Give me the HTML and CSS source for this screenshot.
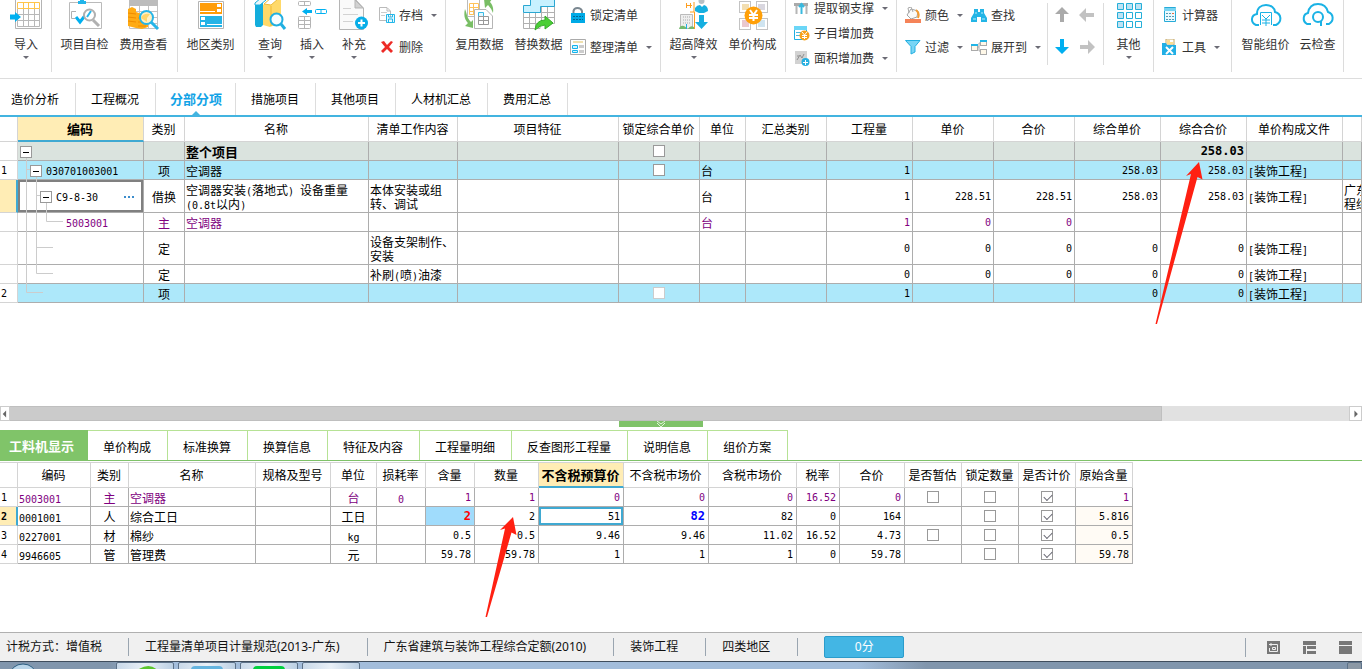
FILE: index.html
```html
<!DOCTYPE html>
<html lang="zh-CN">
<head>
<meta charset="utf-8">
<title>分部分项</title>
<link rel="stylesheet" href="styles.css">
</head>
<body>
<header class="ribbon">
  <div class="group">
    <button class="big w44"><svg viewBox="8 0 36 32"><path d="M15.500-2V28.500H41.500V-2" fill="#fff" stroke="#b4b4b4"/><path d="M17.500 8.500V26.500H39.500V8.500M17.500 14.500H39.500M17.500 20.500H39.500M23.500 8.500V26.500M28.500 8.500V26.500M34.500 8.500V26.500" fill="none" stroke="#b8b8b8"/><path d="M17.500 2.500H39.500V8.500H17.500ZM23.500 2.500V8.500M28.500 2.500V8.500M34.500 2.500V8.500" fill="none" stroke="#ffc54a"/><path d="M10 14.500H15V12L21 17L15 22V19.500H10Z" fill="#00b0f0"/></svg><span>导入</span><i class="caret"></i></button>
  </div>
  <div class="group snug">
    <button class="big"><svg viewBox="67 0 36 32"><path d="M69.500 2.500H101.500V28.500H69.500Z" fill="#fff" stroke="#bababa"/><path d="M78 4V1H80V-1H84V1H86V4Z" fill="#21b5ea"/><path d="M76 11.500H71.500V18.500H75" fill="none" stroke="#b0b0b0"/><path d="M76 17L80 22L87 13" fill="none" stroke="#00b0f0" stroke-width="3"/><circle cx="89.500" cy="15" r="5.500" fill="#fff" stroke="#b0b0b0" stroke-width="2"/><path d="M87 17L91 11" stroke="#25b7ec" stroke-width="2"/><path d="M93 20L99 26" stroke="#b0b0b0" stroke-width="3"/></svg><span>项目自检</span></button>
    <button class="big"><svg viewBox="126 0 36 32"><path d="M129.500-1V28.500H157.500V-1M129.500 11.500H157M139.500 5V28M148.500 5V28M129 17.500H157M129 23.500H157" fill="#fff" stroke="#c2c2c2"/><path d="M129 0H158V6H129Z" fill="#bcbcbc"/><path d="M128 9L132 7L136 9V12L142 14L148 13V27L142 29L136 28L128 26Z" fill="#ffab14"/><path d="M128 13L136 14M128 17L136 18M128 21L136 22M138 18H147M138 22H147M138 26H146" stroke="#ef8c00" fill="none"/><circle cx="146.500" cy="17.500" r="6.500" fill="#fff0c4" stroke="#26b5e8" stroke-width="2"/><path d="M141 18Q143 13 150 14L147 18V22Z" fill="#ffd66d"/><path d="M151 22L158 29" stroke="#26b5e8" stroke-width="3"/></svg><span>费用查看</span></button>
  </div>
  <div class="group snug">
    <button class="big"><svg viewBox="193 0 36 32"><path d="M198.500 1.500H223.500V28.500H198.500Z" fill="#fff" stroke="#b4b4b4"/><path d="M200 3H222V14H200Z" fill="#ff9d0a"/><path d="M217 4H221V7H217ZM217 9H221V12H217ZM200 11H215V12H200Z" fill="#fff"/><path d="M200 16H222V27H200Z" fill="#24b3e6"/><path d="M201 17H205V20H201ZM201 22H205V25H201ZM207 24H222V25H207Z" fill="#fff"/></svg><span>地区类别</span></button>
  </div>
  <div class="group flush">
    <button class="big w42"><svg viewBox="252 0 36 32"><path d="M255 4L261 0H263V25L261 27H256L255 25Z" fill="#13addc"/><path d="M255 3L261-2L266 0L260 5H255Z" fill="#e9f7fb" stroke="#19aedc"/><path d="M263 5L270-1H281V23L270 27L263 25Z" fill="#ffd969"/><path d="M264 4L271-2L278-1L271 5Z" fill="#fff" stroke="#edbb38"/><path d="M271 6V26" stroke="#efb934"/><circle cx="276.500" cy="19.500" r="6" fill="#f7fcff" stroke="#20afe1" stroke-width="2"/><path d="M281 24L285 29" stroke="#20afe1" stroke-width="3"/></svg><span>查询</span><i class="caret"></i></button>
    <button class="big w42"><svg viewBox="294 0 36 32"><g fill="none" stroke="#b4b4b4"><rect x="298.500" y="1.500" width="12" height="4" rx="1"/><path d="M304.500 1V6"/><rect x="298.500" y="16.500" width="12" height="12" rx="1"/><path d="M304.500 16V29M298 20.500H311M298 24.500H311"/></g><path d="M302 11.500L307 8V10H312V13H307V15Z" fill="#00b0f0"/><rect x="315.500" y="9.500" width="11" height="4" rx="1" fill="#fff" stroke="#00b0f0"/><path d="M321 9V14" stroke="#00b0f0"/></svg><span>插入</span><i class="caret"></i></button>
    <button class="big w42"><svg viewBox="336 0 36 32"><path d="M339.500-1H355L363.500 8V29.500H339.500Z" fill="#fafafa" stroke="#b5b5b5"/><path d="M355 0V8H363Z" fill="#d2d2d2" stroke="#b5b5b5"/><path d="M343 8.500H351M343 14.500H358M343 21.500H353" stroke="#d3d3d3"/><circle cx="361.500" cy="23" r="6.500" fill="#08aee8"/><path d="M358 23H365M361.500 19.500V26.500" stroke="#fff" stroke-width="2"/></svg><span>补充</span><i class="caret"></i></button>
    <div class="stack two">
      <button class="small"><svg viewBox="379 7 16 16"><path d="M379.500 7.500H387L390.500 11V20.500H379.500ZM387 8V11H390" fill="#fff" stroke="#bababa"/><path d="M381 12.500H387M381 15.500H385" stroke="#ccc"/><path d="M386.500 14.500H394.500V22.500H386.500ZM388.500 14V17H392.500V14M388.500 22V19H392.500V22" fill="#e7f8fe" stroke="#24b7e9"/></svg><span>存档</span><i class="caret"></i></button>
      <button class="small"><svg viewBox="379 39 16 16"><path d="M381 42L384 41L387 45L391 41L393 42L389 47L393 51L391 53L387 49L383 53L381 51L385 47Z" fill="#ed2b26"/></svg><span>删除</span></button>
    </div>
  </div>
  <div class="group flush">
    <button class="big"><svg viewBox="461 0 36 32"><path d="M466.500 0V16.500H478.500V0" fill="#fff" stroke="#bbb"/><path d="M468.500 3.500H477.500V14.500H468.500ZM468 7.500H478M468 11.500H478M472.500 3V15" fill="none" stroke="#ffc35a"/><path d="M473.500 9.500H485L491.500 16V28.500H473.500Z" fill="#fff" stroke="#b5b5b5"/><path d="M477.500 12.500H482.500V16.500H477.500Z" fill="#e1f7ff" stroke="#38bbe6"/><path d="M477.500 16.500V24.500H487.500V16.500ZM477 20.500H488M482.500 17V25" fill="none" stroke="#999"/><path d="M464 9C462 17 465 21 467 23L464 26L472 28V20L470 22C466 18 466 14 464 9Z" fill="#79be65"/><path d="M483-1H491L489 2Q493 6 492 13Q490 8 487 5L484 8Z" fill="#79be65"/></svg><span>复用数据</span></button>
    <button class="big"><svg viewBox="519 0 36 32"><path d="M521.500 12.500V28.500H538V23.500H552.500V6" fill="#fff" stroke="#b0b0b0"/><path d="M521.500 17.500H552M521.500 23.500H552M527.500 12V28M533.500 12V28M539.500 7V23M545.500 7V23M538 12.500H552" fill="none" stroke="#b0b0b0"/><path d="M528.500-1H552.500V6.500H538.500V12.500H521.500V5.500H528.500Z" fill="#c8f1ff" stroke="#2aa7d2"/><path d="M533 30Q534 20 543 20V16L551 23L543 29V25Q538 25 533 30Z" fill="#4bcf36" stroke="#35ac2a"/></svg><span>替换数据</span></button>
    <div class="stack two tight">
      <button class="small"><svg viewBox="570 7 16 16"><path d="M573.500 13V11Q574 8 577.500 8Q581 8 582 11V13" fill="none" stroke="#7b8891" stroke-width="2"/><rect x="571" y="13" width="14" height="10" fill="#00aae6"/><path d="M573 16.500H583M573 19.500H583" stroke="#076591" stroke-dasharray="2 1"/></svg><span>锁定清单</span></button>
      <button class="small"><svg viewBox="570 39 16 16"><path d="M570.500 39.500H585.500V54.500H570.500Z" fill="#fff" stroke="#aaa"/><path d="M573 41H583V43H573Z" fill="#efe0ae"/><path d="M572.500 45.500H577.500V48.500H572.500ZM572.500 50.500H577.500V52.500H572.500Z" fill="#d1f4ff" stroke="#13b4ec"/><path d="M579 45H584V48H579ZM579 50H584V53H579Z" fill="#ccc"/></svg><span>整理清单</span><i class="caret"></i></button>
    </div>
  </div>
  <div class="group narrow">
    <button class="big"><svg viewBox="676 0 36 32"><path d="M686.500 3V8M690.500 3V8M686 5.500H692M694 2V12H690M694.500 12V29" fill="none" stroke="#ff9e1e"/><path d="M680.500 14.500H692.500V28.500H680.500Z" fill="#eee" stroke="#bbb"/><path d="M683 17H691M683 20H691M683 23H691" stroke="#aaa" stroke-dasharray="1 1"/><path d="M679 29Q680 25 684 26L687 28V29ZM688 29Q690 25 694 27V29Z" fill="#75ba6e"/><path d="M686.500 24V29" stroke="#20b0e2"/><circle cx="701.500" cy="1" r="3" fill="#b7c0c5"/><path d="M695 11V8Q697 5 700 5L702 7L704 5Q708 6 708 11L704 13H699Z" fill="#16afe0"/><path d="M699 15H704V22H708L701.500 29L695 22H699Z" fill="#16afe0"/></svg><span>超高降效</span><i class="caret"></i></button>
    <button class="big"><svg viewBox="734 0 36 32"><g fill="#fff" stroke="#c3c3c3"><rect x="738.500" y="1.500" width="11" height="11"/><rect x="755.500" y="1.500" width="11" height="11"/><rect x="738.500" y="18.500" width="11" height="11"/><rect x="755.500" y="18.500" width="11" height="11"/></g><path d="M741 4H748V10H741Z" fill="#f2deb1"/><path d="M757 4H764V10H757Z" fill="#d9d7df"/><path d="M741 20H748V27H741Z" fill="#eac8ce"/><path d="M757 20H764V27H757Z" fill="#cfe4f0"/><circle cx="752.500" cy="15.500" r="9" fill="#ffa009"/><path d="M749 10L752.500 15L756 10M752.500 15V21M748 15H757M748 18H757" fill="none" stroke="#fff" stroke-width="2"/></svg><span>单价构成</span></button>
  </div>
  <div class="group flush">
    <div class="stack three">
      <button class="small"><svg viewBox="795 0 16 16"><path d="M795 3H809V6H795Z" fill="#aaa"/><path d="M797.500 6V14M807.500 6V14" stroke="#b6b6b6" stroke-width="2"/><path d="M802.500 3V14M800 7L802.500 4L805 7" fill="none" stroke="#38b9df" stroke-width="2"/></svg><span>提取钢支撑</span><i class="caret"></i></button>
      <button class="small"><svg viewBox="795 25 16 16"><path d="M795.500 26.500H807.500V39.500H795.500Z" fill="#fff" stroke="#1eaee3"/><path d="M795 26H808V30H795Z" fill="#6bd6f7"/><path d="M797 32.500H802M797 35.500H802" stroke="#4bbade"/><circle cx="805.500" cy="35.500" r="5" fill="#f7a11a"/><path d="M803 32L805.500 35L808 32M805.500 35V39M803 35.500H808M803 37.500H808" fill="none" stroke="#fff"/></svg><span>子目增加费</span></button>
      <button class="small"><svg viewBox="795 50 16 16"><rect x="796" y="51" width="12" height="13" fill="#d2d2d2"/><path d="M798 60L801 55L803 58L805 54M798 56H800" fill="none" stroke="#909090"/><circle cx="806.500" cy="62" r="4" fill="#26afe0"/><path d="M804 62.500H809M806.500 60V65" stroke="#fff"/></svg><span>面积增加费</span><i class="caret"></i></button>
    </div>
  </div>
  <div class="group flush">
    <div class="stack two lead">
      <button class="small"><svg viewBox="905 7 16 16"><path d="M907 15L911 9L918 11L917 17L911 19Z" fill="#fafafa" stroke="#a3a3a3"/><path d="M909 13L908 8L911 7L913 12" fill="none" stroke="#aaa"/><path d="M916 10Q920 13 918 18" fill="none" stroke="#f49b31" stroke-width="2"/><path d="M905 19H921V23H905Z" fill="#f58358"/></svg><span>颜色</span><i class="caret"></i></button>
      <button class="small"><svg viewBox="905 39 16 16"><path d="M905.500 40.500H920L915 46.500V52L911 54V46.500Z" fill="#78d5f5" stroke="#22afe1"/></svg><span>过滤</span><i class="caret"></i></button>
    </div>
    <div class="stack two after">
      <button class="small"><svg viewBox="971 7 16 16"><path d="M974 9H978V12H980V9H984V13L987 18V22H981V17H977V22H971V18L974 13Z" fill="#23b5e6"/><path d="M973 19H976M982 19H985M975 13H977M981 13H983" stroke="#b8edfb"/></svg><span>查找</span></button>
      <button class="small"><svg viewBox="971 39 16 16"><path d="M977 47H979V43H981M979 47V51H981" fill="none" stroke="#aaa"/><path d="M971 44H978V51H971ZM980 40H987V46H980ZM980 49H987V55H980Z" fill="#aaa"/><path d="M971 44H978V46H971ZM980 40H987V42H980Z" fill="#23b5e6"/><path d="M972 46H977V50H972ZM981 42H986V45H981ZM981 50H986V54H981Z" fill="#fff8e8"/></svg><span>展开到</span><i class="caret"></i></button>
    </div>
    <div class="moves">
      <button aria-label="上移"><svg viewBox="0 0 16 16"><path d="M8 0L15 7H10V15H6V7H1Z" fill="#aaa"/></svg></button>
      <button aria-label="升级"><svg viewBox="0 0 16 16"><path d="M0 8L7 1V6H15V10H7V15Z" fill="#c2c2c2"/></svg></button>
      <button aria-label="下移"><svg viewBox="0 0 16 16"><path d="M8 15L15 8H10V0H6V8H1Z" fill="#00aff0"/></svg></button>
      <button aria-label="降级"><svg viewBox="0 0 16 16"><path d="M16 8L9 1V6H1V10H9V15Z" fill="#c2c2c2"/></svg></button>
    </div>
    <button class="big w49"><svg viewBox="1110 0 36 32"><g fill="#fff" stroke="#24afd9"><path d="M1116.500 3.500h6v6h-6zM1125.500 3.500h6v6h-6zM1134.500 3.500h6v6h-6zM1116.500 12.500h6v6h-6zM1116.500 21.500h6v6h-6z" fill="#bfe2f3"/><path d="M1125.500 12.500h6v6h-6zM1134.500 12.500h6v6h-6zM1125.500 21.500h6v6h-6zM1134.500 21.500h6v6h-6z"/></g></svg><span>其他</span><i class="caret"></i></button>
  </div>
  <div class="group flush">
    <div class="stack two lead tools">
      <button class="small"><svg viewBox="1163 7 16 16"><path d="M1165.500 7.500H1176.500V21.500H1165.500Z" fill="#eafaff" stroke="#27abd8"/><path d="M1165 8H1177V11H1165Z" fill="#77d4f2"/><path d="M1167 13.500H1175M1167 16.500H1175M1167 19.500H1175" stroke="#539bb5" stroke-dasharray="2 1"/><path d="M1173 13.500H1175" stroke="#ef6a3c"/></svg><span>计算器</span></button>
      <button class="small"><svg viewBox="1163 39 16 16"><path d="M1167 39H1175V45H1167Z" fill="#fff" stroke="#c5a865"/><path d="M1168 41H1171M1168 43H1174" stroke="#ffba20"/><path d="M1163 43H1167L1168 45H1177V55H1163Z" fill="#22afe5"/><path d="M1167 47L1174 54M1174 47L1167 54" stroke="#fff" stroke-width="2"/></svg><span>工具</span><i class="caret"></i></button>
    </div>
  </div>
  <div class="group">
    <button class="big"><svg viewBox="1247 0 36 32"><path d="M1258 25H1255C1249 22 1250 15 1256 14C1256 8 1260 5 1265 5C1270 5 1274 8 1274 12C1281 14 1281 22 1275 25H1272" fill="none" stroke="#1ab2e5" stroke-width="2"/><path d="M1259.500 25V12.500H1270.500V25" fill="none" stroke="#1ab2e5"/><path d="M1261 15L1265 19L1269 15M1265 19V26M1261 20H1269M1261 23H1269" fill="none" stroke="#1ab2e5"/></svg><span>智能组价</span></button>
    <button class="big w45"><svg viewBox="1299 0 36 32"><path d="M1310 24H1306C1301 21 1302 14 1307 13C1308 7 1312 4 1317 4C1323 4 1326 8 1327 12C1333 14 1333 21 1328 24H1325" fill="none" stroke="#1ab2e5" stroke-width="2"/><circle cx="1317" cy="17" r="5" fill="none" stroke="#1ab2e5" stroke-width="2"/><path d="M1320 21V26" stroke="#1ab2e5" stroke-width="2"/></svg><span>云检查</span></button>
  </div>
</header>

<nav class="tabs">
  <button>造价分析</button><button>工程概况</button><button class="on">分部分项</button><button>措施项目</button><button>其他项目</button><button>人材机汇总</button><button>费用汇总</button>
</nav>

<main class="upper">
  <table class="grid">
    <colgroup><col class="c18"><col class="c126"><col class="c41"><col class="c184"><col class="c89"><col class="c161"><col class="c81"><col class="c46"><col class="c81"><col class="c86"><col class="c81"><col class="c81"><col class="c86"><col class="c86"><col class="c96"><col></colgroup>
    <thead><tr><th></th><th class="cur">编码</th><th>类别</th><th>名称</th><th>清单工作内容</th><th>项目特征</th><th>锁定综合单价</th><th>单位</th><th>汇总类别</th><th>工程量</th><th>单价</th><th>合价</th><th>综合单价</th><th>综合合价</th><th>单价构成文件</th><th></th></tr></thead>
    <tbody>
      <tr class="total"><th></th><td class="tree"><svg class="branches" viewBox="18 142 126 160"><path d="M26.500 157V292.500H43M26 169.500H31M36.500 176V273.500H53M36 195.500H41M36 247.500H53M46.500 202V221.500H63" fill="none" stroke="#ccc"/></svg><button class="fold" aria-label="折叠"></button></td><td></td><td><b class="t13">整个项目</b></td><td></td><td></td><td class="mid"><input type="checkbox" aria-label="锁定综合单价"></td><td></td><td></td><td></td><td></td><td></td><td></td><td class="n"><b>258.03</b></td><td></td><td></td></tr>
      <tr class="blue"><th>1</th><td class="tree l1"><button class="fold" aria-label="折叠"></button><span class="m">030701003001</span></td><td class="mid">项</td><td>空调器</td><td></td><td></td><td class="mid"><input type="checkbox" aria-label="锁定综合单价"></td><td>台</td><td></td><td class="n">1</td><td></td><td></td><td class="n">258.03</td><td class="n">258.03</td><td><span class="m">[</span>装饰工程<span class="m">]</span></td><td></td></tr>
      <tr class="tall"><th class="now"></th><td class="tree l2 picked"><button class="fold" aria-label="折叠"></button><span class="m">C9-8-30</span><button class="more" aria-label="更多"><i></i><i></i><i></i></button></td><td class="mid">借换</td><td>空调器安装<span class="m">(</span>落地式<span class="m">) </span>设备重量<br><span class="m">(0.8t</span>以内<span class="m">)</span></td><td>本体安装或组<br>转、调试</td><td></td><td></td><td>台</td><td></td><td class="n">1</td><td class="n">228.51</td><td class="n">228.51</td><td class="n">258.03</td><td class="n">258.03</td><td><span class="m">[</span>装饰工程<span class="m">]</span></td><td>广东<br>程综</td></tr>
      <tr class="purple"><th></th><td class="tree l3"><span class="m">5003001</span></td><td class="mid">主</td><td>空调器</td><td></td><td></td><td></td><td>台</td><td></td><td class="n">1</td><td class="n">0</td><td class="n">0</td><td></td><td></td><td></td><td></td></tr>
      <tr class="tall"><th></th><td></td><td class="mid">定</td><td></td><td>设备支架制作、<br>安装</td><td></td><td></td><td></td><td></td><td class="n">0</td><td class="n">0</td><td class="n">0</td><td class="n">0</td><td class="n">0</td><td><span class="m">[</span>装饰工程<span class="m">]</span></td><td></td></tr>
      <tr><th></th><td></td><td class="mid">定</td><td></td><td>补刷<span class="m">(</span>喷<span class="m">)</span>油漆</td><td></td><td></td><td></td><td></td><td class="n">0</td><td class="n">0</td><td class="n">0</td><td class="n">0</td><td class="n">0</td><td><span class="m">[</span>装饰工程<span class="m">]</span></td><td></td></tr>
      <tr class="blue"><th>2</th><td></td><td class="mid">项</td><td></td><td></td><td></td><td class="mid"><input class="pale" type="checkbox" aria-label="锁定综合单价"></td><td></td><td></td><td class="n">1</td><td></td><td></td><td class="n">0</td><td class="n">0</td><td><span class="m">[</span>装饰工程<span class="m">]</span></td><td></td></tr>
    </tbody>
  </table>
</main>

<div class="scroll"><button aria-label="向左滚动"><svg viewBox="0 0 10 14"><path d="M6 3V11L2 7Z" fill="#666"/></svg></button><div class="track"><div class="thumb"></div></div><button aria-label="向右滚动"><svg viewBox="0 0 10 14"><path d="M4 3V11L8 7Z" fill="#666"/></svg></button></div>
<div class="splitter"><button aria-label="收起"><svg viewBox="0 0 10 6"><path d="M1 0L5 3L9 0M1 2L5 6L9 2" fill="none" stroke="#e2f5da"/></svg></button></div>

<nav class="subtabs">
  <button class="on">工料机显示</button><button>单价构成</button><button>标准换算</button><button>换算信息</button><button>特征及内容</button><button>工程量明细</button><button>反查图形工程量</button><button>说明信息</button><button>组价方案</button>
</nav>

<section class="lower">
  <table class="grid detail">
    <colgroup><col class="c18"><col class="c73"><col class="c38"><col class="c127"><col class="c75"><col class="c46"><col class="c49"><col class="c49"><col class="c64"><col class="c85"><col class="c85"><col class="c88"><col class="c43"><col class="c65"><col class="c57"><col class="c57"><col class="c57"><col class="c57"></colgroup>
    <thead><tr><th></th><th>编码</th><th>类别</th><th>名称</th><th>规格及型号</th><th>单位</th><th>损耗率</th><th>含量</th><th>数量</th><th class="cur">不含税预算价</th><th>不含税市场价</th><th>含税市场价</th><th>税率</th><th>合价</th><th>是否暂估</th><th>锁定数量</th><th>是否计价</th><th>原始含量</th></tr></thead>
    <tbody>
      <tr class="purple"><th>1</th><td><span class="m">5003001</span></td><td class="mid">主</td><td>空调器</td><td></td><td class="mid">台</td><td class="mid"><span class="m">0</span></td><td class="n">1</td><td class="n">1</td><td class="n">0</td><td class="n">0</td><td class="n">0</td><td class="n">16.52</td><td class="n">0</td><td class="mid"><input type="checkbox" aria-label="是否暂估"></td><td class="mid"><input type="checkbox" aria-label="锁定数量"></td><td class="mid"><input type="checkbox" checked aria-label="是否计价"></td><td class="n">1</td></tr>
      <tr><th class="now"><b>2</b></th><td><span class="m">0001001</span></td><td class="mid">人</td><td>综合工日</td><td></td><td class="mid">工日</td><td></td><td class="n changed"><b>2</b></td><td class="n">2</td><td class="n focus">51</td><td class="n market"><b>82</b></td><td class="n">82</td><td class="n">0</td><td class="n">164</td><td></td><td class="mid"><input type="checkbox" aria-label="锁定数量"></td><td class="mid"><input type="checkbox" checked aria-label="是否计价"></td><td class="n cream">5.816</td></tr>
      <tr><th>3</th><td><span class="m">0227001</span></td><td class="mid">材</td><td>棉纱</td><td></td><td class="mid"><span class="m">kg</span></td><td></td><td class="n">0.5</td><td class="n">0.5</td><td class="n">9.46</td><td class="n">9.46</td><td class="n">11.02</td><td class="n">16.52</td><td class="n">4.73</td><td class="mid"><input type="checkbox" aria-label="是否暂估"></td><td class="mid"><input type="checkbox" aria-label="锁定数量"></td><td class="mid"><input type="checkbox" checked aria-label="是否计价"></td><td class="n cream">0.5</td></tr>
      <tr><th>4</th><td><span class="m">9946605</span></td><td class="mid">管</td><td>管理费</td><td></td><td class="mid">元</td><td></td><td class="n">59.78</td><td class="n">59.78</td><td class="n">1</td><td class="n">1</td><td class="n">1</td><td class="n">0</td><td class="n">59.78</td><td></td><td class="mid"><input type="checkbox" aria-label="锁定数量"></td><td class="mid"><input type="checkbox" checked aria-label="是否计价"></td><td class="n cream">59.78</td></tr>
    </tbody>
  </table>
</section>

<footer class="status">
  <span>计税方式：增值税</span><span>工程量清单项目计量规范(2013-广东)</span><span>广东省建筑与装饰工程综合定额(2010)</span><span>装饰工程</span><span>四类地区</span>
  <button class="score">0分</button>
  <div class="views">
    <button aria-label="缩放"><svg viewBox="0 0 13 13"><path d="M0 0H13V13H0Z" fill="#777"/><path d="M2 3.500H10.500V10.500H2.500V7M4 2V5" fill="none" stroke="#eee"/><path d="M5.500 6.500H8.500V8.500H5.500Z" fill="#777" stroke="#eee"/></svg></button>
    <button aria-label="三栏"><svg viewBox="0 0 13 13"><path d="M0 0H13V4H0ZM0 5H3V13H0ZM4 5H13V8H4ZM4 10H13V13H4Z" fill="#777"/></svg></button>
    <button aria-label="两栏"><svg viewBox="0 0 13 13"><path d="M0 0H13V4H0ZM0 5H13V13H0Z" fill="#777"/></svg></button>
  </div>
</footer>
<div class="taskbar">
  <div class="orb"><svg viewBox="0 0 30 8"><ellipse cx="15" cy="13" rx="13" ry="11" fill="#b9d5e9" stroke="#2b5d80"/></svg></div>
  <button aria-label="浏览器"><svg viewBox="0 0 32 8"><path d="M6 8Q14 1 25 5L22 8Z" fill="#e7efe8"/><path d="M11 7Q20 2 26 7" fill="none" stroke="#5cc62f" stroke-width="3"/></svg></button>
  <button aria-label="计价软件"><svg viewBox="0 0 32 8"><rect y="3" width="32" height="12" rx="4" fill="#64b4df"/></svg></button>
  <button aria-label="聊天"><svg viewBox="0 0 32 8"><rect y="3" width="32" height="12" rx="4" fill="#00cf3e"/></svg></button>
  <button aria-label="窗口"></button>
  <button class="desktop" aria-label="显示桌面"></button>
</div>

<svg class="mark first" viewBox="1155 162 49 163"><path d="M1199 162L1202.500 179.500L1197.500 177L1157 324H1155.500L1191 174L1186 176Z" fill="#ff2012"/></svg>
<svg class="mark second" viewBox="485 517 33 101"><path d="M513 517L516.500 535L511.500 532.500L487 617H485.500L505 528.500L500 530Z" fill="#ff2012"/></svg>
</body>
</html>
```
FILE: styles.css
```css
* { box-sizing: border-box; }
body {
  margin: 0;
  min-height: 100vh;
  display: flex;
  flex-direction: column;
  position: relative;
  overflow: hidden;
  background: #fff;
  color: #000;
  font: 12px/14px "Noto Sans CJK SC", sans-serif;
}
button {
  margin: 0;
  padding: 0;
  border: 0;
  background: none;
  color: inherit;
  font: inherit;
  white-space: nowrap;
}
svg { display: block; }

/* ribbon */
.ribbon {
  display: flex;
  flex: none;
  height: 79px;
  padding-bottom: 6px;
  border-bottom: 1px solid #ddd;
  color: #333;
}
.group {
  display: flex;
  flex: none;
  align-items: flex-start;
  padding: 0 3px 0 4px;
  border-right: 1px solid #dcdcdc;
}
.group.flush { padding-right: 0; }
.group.snug { padding: 0 4px 0 3px; }
.group.narrow { padding: 0 3px; }
.big {
  width: 59px;
  display: flex;
  flex-direction: column;
  align-items: center;
}
.big svg { width: 36px; height: 32px; }
.big span { line-height: 24px; }
.w42 { width: 42px; }
.w44 { width: 44px; }
.w45 { width: 45px; }
.w49 { width: 49px; }
.caret {
  width: 6px;
  border: 3px solid transparent;
  border-top-color: #6b6b75;
  border-bottom: 0;
}
.stack {
  display: flex;
  flex-direction: column;
  align-items: flex-start;
  padding: 0 8px 0 4px;
}
.two { gap: 16px; padding-top: 7px; }
.tight { padding-left: 2px; }
.three { gap: 9px; }
.after { padding: 7px 6px 0 0; }
.tools { padding-right: 11px; }
.small {
  display: flex;
  align-items: center;
  gap: 4px;
  height: 16px;
}
.small svg { width: 16px; height: 16px; }
.small .caret { margin-left: 4px; }
.moves {
  display: grid;
  grid-template-columns: 16px 16px;
  gap: 16px 9px;
  margin-top: 3px;
  padding: 4px 8px 10px 6px;
  border: solid #dcdcdc;
  border-width: 0 1px;
}
.moves svg { width: 16px; height: 16px; }

/* page tabs */
.tabs {
  display: flex;
  flex: none;
  height: 38px;
  padding-top: 4px;
  border-bottom: 2px solid #43b4e0;
}
.tabs button {
  position: relative;
  padding: 0 16px 0 15px;
  border-right: 1px solid #ddd;
}
.tabs button:first-child { padding-left: 11px; }
.tabs .on {
  padding: 0 13px 0 14px;
  color: #12a3e6;
  font-size: 13px;
  font-weight: bold;
}
.tabs .on::after {
  content: "";
  position: absolute;
  left: 50%;
  bottom: 0;
  margin-left: -4px;
  border: 4px solid transparent;
  border-top: 0;
  border-bottom-color: #43b4e0;
}

/* grids */
.upper { flex: 290 1 0; overflow: hidden; }
.lower { flex: 170 1 0; padding-top: 1px; overflow: hidden; }
.grid {
  width: 100%;
  table-layout: fixed;
  border-collapse: separate;
  border-spacing: 0;
}
.detail { width: 1133px; border-top: 1px solid #d4d4d4; }
.c18 { width: 18px; }
.c38 { width: 38px; }
.c41 { width: 41px; }
.c43 { width: 43px; }
.c46 { width: 46px; }
.c49 { width: 49px; }
.c57 { width: 57px; }
.c64 { width: 64px; }
.c65 { width: 65px; }
.c73 { width: 73px; }
.c75 { width: 75px; }
.c81 { width: 81px; }
.c85 { width: 85px; }
.c86 { width: 86px; }
.c88 { width: 88px; }
.c89 { width: 89px; }
.c96 { width: 96px; }
.c126 { width: 126px; }
.c127 { width: 127px; }
.c161 { width: 161px; }
.c184 { width: 184px; }
.grid th, .grid td {
  height: 19px;
  padding: 1px 2px 0 1px;
  border: solid #adadad;
  border-width: 0 1px 1px 0;
  overflow: hidden;
  white-space: nowrap;
  text-align: left;
  vertical-align: middle;
}
.grid th {
  border-color: #d4d4d4;
  background: #fff;
  font-weight: normal;
}
.grid thead th { height: 25px; padding: 0 1px 0 0; text-align: center; }
.grid tbody th { font: 10px/14px "DejaVu Sans Mono", monospace; }
.grid thead .cur {
  background: #ffedb5;
  border-bottom: 2px solid #3fa9d2;
  font-size: 13px;
  font-weight: bold;
}
.grid .tall td { height: 33px; }
.grid .now {
  background: #ffedb5;
  border-right: 2px solid #3fa9d2;
}
.total td { background: #dae3de; }
.blue td { background: #ade8fa; }
.purple td { color: #800080; }
.t13 { font-size: 13px; }
.m { font: 10px/10px "DejaVu Sans Mono", monospace; white-space: pre; }
.grid .n { text-align: right; font: 10px/14px "DejaVu Sans Mono", monospace; padding-top: 2px; }
.detail .n { padding-right: 3px; }
.n b { font-size: 12px; line-height: 12px; }
.grid .mid { padding-left: 2px; text-align: center; }
.grid .changed { background: #a0dcfc; color: #f00; }
.market { color: #00f; }
.cream { background: #fffbf5; }
.grid .focus { box-shadow: inset 0 0 0 2px #3fa9d2; }
.grid .picked { box-shadow: inset 0 0 0 2px #808080; }
.grid .tree { position: relative; padding-top: 0; padding-left: 2px; overflow: visible; }
.grid .l1 { padding-left: 12px; }
.grid .l2 { padding-left: 22px; }
.grid .l3 { padding-left: 48px; }
.branches {
  position: absolute;
  z-index: 1;
  left: 0;
  top: 0;
  width: 126px;
  height: 160px;
  pointer-events: none;
}
.fold {
  position: relative;
  z-index: 2;
  display: inline-block;
  width: 12px;
  height: 12px;
  margin-right: 4px;
  border: 1px solid #999;
  background: #fff;
  vertical-align: middle;
}
.fold::before {
  content: "";
  display: block;
  height: 1px;
  margin: 0 2px;
  background: #000;
}
.more {
  position: absolute;
  right: 9px;
  top: 50%;
  display: flex;
  gap: 2px;
}
.more i { width: 2px; height: 2px; background: #3c8dcc; }
input {
  appearance: none;
  display: block;
  width: 12px;
  height: 12px;
  margin: 0 auto;
  border: 1px solid #999;
  background: #fff;
}
.grid td:has(input) { padding: 0 3px 0 0; }
.pale { border-color: #ccc; }
input:checked::after {
  content: "";
  display: block;
  width: 7px;
  height: 4px;
  margin: 2px 0 0 2px;
  border: solid #696974;
  border-width: 0 0 1px 1px;
  transform: rotate(-45deg);
}

/* scroll bar and splitter */
.scroll { display: flex; flex: none; height: 15px; background: #e1e1e1; }
.scroll button { width: 10px; background: #fff; border: 1px solid #ccc; }
.scroll button:last-child { width: 13px; }
.scroll svg { height: 12px; margin: auto; }
.track { flex: 1; }
.thumb { width: 86%; height: 15px; background: #cbcbcb; border: solid #bfbfbf; border-width: 1px 1px 1px 0; }
.splitter { display: flex; flex: none; justify-content: center; height: 9px; }
.splitter button { width: 84px; height: 6px; margin-right: 40px; background: #7fc269; }
.splitter svg { width: 10px; height: 6px; margin: auto; }

/* detail tabs */
.subtabs { display: flex; flex: none; height: 31px; border-bottom: 1px solid #7fc269; }
.subtabs button {
  padding: 2px 16px 0 15px;
  border: solid #b6e295;
  border-width: 1px 1px 0 0;
}
.subtabs .on {
  padding: 2px 14px 0 9px;
  border: 0;
  background: #80c469;
  color: #fff;
  font-size: 13px;
  font-weight: bold;
}

/* status and task bars */
.status {
  display: flex;
  flex: none;
  align-items: center;
  height: 29px;
  border-top: 1px solid #b0b0b0;
  background: #f0f0f0;
  color: #111;
  font-family: "Noto Sans", "Noto Sans CJK SC", sans-serif;
}
.status > span {
  padding: 2px 27px 2px 16px;
  border-right: 1px solid #9aa5b0;
  white-space: nowrap;
}
.status > span:first-child { padding: 2px 26px 2px 6px; }
.score {
  width: 80px;
  height: 22px;
  margin-left: 26px;
  border: 1px solid #2b9ccb;
  border-radius: 2px;
  background: #43b6e4;
  color: #fff;
}
.views {
  display: flex;
  gap: 23px;
  margin-left: auto;
  padding: 3px 10px 3px 21px;
  border-left: 1px solid #9aa5b0;
}
.views svg { width: 13px; height: 13px; }
.taskbar {
  display: flex;
  flex: none;
  gap: 4px;
  height: 8px;
  overflow: hidden;
  border-top: 1px solid #3f4d5d;
  background: linear-gradient(90deg, #8196ad 0, #8196ad 8%, #a3bddb 12%, #a3bddb 63%, #8196ad 68%);
}
.orb { width: 112px; padding-left: 8px; }
.orb svg { width: 30px; height: 8px; }
.taskbar button {
  width: 58px;
  height: 12px;
  border: 1px solid #5c7188;
  border-radius: 2px;
  background: linear-gradient(90deg, #c9d9e9, #e9f0f7 50%, #bcd0e4);
}
.taskbar button svg { width: 32px; height: 8px; margin: 0 auto 4px; }
.taskbar .desktop { width: 15px; margin-left: auto; background: #8b98a5; }

/* arrows laid over the tables */
.mark { position: absolute; z-index: 3; pointer-events: none; }
.first { left: 1155px; top: 162px; width: 49px; height: 163px; }
.second { left: 485px; top: 517px; width: 33px; height: 101px; }
```
